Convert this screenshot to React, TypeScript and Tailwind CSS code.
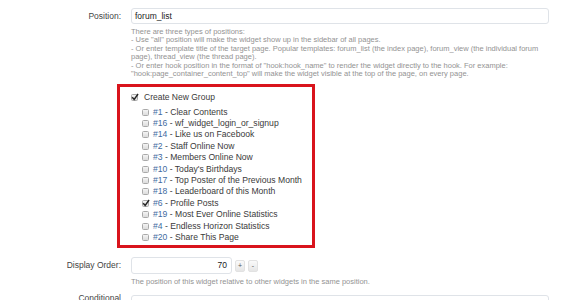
import React from 'react'

type Widget = { id: number; title: string; checked?: boolean }

const widgets: Widget[] = [
  { id: 1, title: 'Clear Contents' },
  { id: 16, title: 'wf_widget_login_or_signup' },
  { id: 14, title: 'Like us on Facebook' },
  { id: 2, title: 'Staff Online Now' },
  { id: 3, title: 'Members Online Now' },
  { id: 10, title: "Today's Birthdays" },
  { id: 17, title: 'Top Poster of the Previous Month' },
  { id: 18, title: 'Leaderboard of this Month' },
  { id: 6, title: 'Profile Posts', checked: true },
  { id: 19, title: 'Most Ever Online Statistics' },
  { id: 4, title: 'Endless Horizon Statistics' },
  { id: 20, title: 'Share This Page' },
]

const helpLines = [
  'There are three types of positions:',
  '- Use "all" position will make the widget show up in the sidebar of all pages.',
  '- Or enter template title of the target page. Popular templates: forum_list (the index page), forum_view (the individual forum',
  'page), thread_view (the thread page).',
  '- Or enter hook position in the format of "hook:hook_name" to render the widget directly to the hook. For example:',
  '"hook:page_container_content_top" will make the widget visible at the top of the page, on every page.',
]

const Checkbox = ({ checked }: { checked?: boolean }) => (
  <span className="relative inline-block w-[7px] h-[7px] shrink-0 rounded-[1.5px] border border-[#a9a9a9] bg-gradient-to-b from-[#f4f4f4] to-[#dcdcdc]">
    {checked && (
      <svg viewBox="0 0 10 10" className="absolute left-[-1px] top-[-2px] w-[8px] h-[8px]">
        <path d="M1.5 5.2 L4 8 L8.8 1.2" fill="none" stroke="#222" strokeWidth="1.8" />
      </svg>
    )}
  </span>
)

const Label = ({ children }: { children: React.ReactNode }) => (
  <div className="w-[121px] shrink-0 text-right text-[8.5px] text-[#444]">{children}</div>
)

export default function App() {
  return (
    <div className="w-[573px] h-[300px] overflow-hidden bg-white pt-[8px] font-['Liberation_Sans',Arial,sans-serif]">
      {/* Position */}
      <div className="flex items-start gap-[10px]">
        <Label>
          <div className="h-[16px] leading-[16px]">Position:</div>
        </Label>
        <div className="w-[418px]">
          <div className="h-[16px] rounded-[3px] border border-[#dfe3e8] bg-white pl-[3px] text-[8.5px] leading-[14px] text-[#222]">
            forum_list
          </div>
          <div className="mt-[4px] text-[7.5px] leading-[8.4px] text-[#939393]">
            {helpLines.map((line, i) => (
              <div key={i} className="whitespace-nowrap">
                {line}
              </div>
            ))}
          </div>

          {/* group box */}
          <div className="ml-[-14px] mt-[6px] h-[164px] w-[198px] border-[3px] border-[#d9141c] bg-white pl-[11px] pt-[4px]">
            <div className="flex items-center gap-[6px] h-[11.4px] text-[8.5px] text-[#3a3a3a]">
              <Checkbox checked />
              <span>Create New Group</span>
            </div>
            <div className="mt-[3.6px] pl-[11px]">
              {widgets.map((w) => (
                <div key={w.id} className="flex items-center gap-[4px] h-[11.4px] text-[8.6px] whitespace-nowrap">
                  <Checkbox checked={w.checked} />
                  <span className="text-[#3a3a3a]">
                    <span className="text-[#3f6b9f]">#{w.id}</span> - {w.title}
                  </span>
                </div>
              ))}
            </div>
          </div>
        </div>
      </div>

      {/* Display Order */}
      <div className="mt-[9px] flex items-start gap-[10px]">
        <Label>
          <div className="h-[17px] leading-[17px]">Display Order:</div>
        </Label>
        <div className="w-[418px]">
          <div className="flex items-center gap-[3px]">
            <div className="h-[17px] w-[101px] rounded-[3px] border border-[#dfe3e8] bg-white pr-[4px] text-right text-[8.5px] leading-[15px] text-[#222]">
              70
            </div>
            <div className="flex h-[12px] w-[10px] items-center justify-center rounded-[2px] border border-[#e2e2e2] bg-gradient-to-b from-[#fafafa] to-[#e6e6e6] text-[7px] leading-none text-[#555]">
              +
            </div>
            <div className="flex h-[12px] w-[10px] items-center justify-center rounded-[2px] border border-[#e2e2e2] bg-gradient-to-b from-[#fafafa] to-[#e6e6e6] text-[7px] leading-none text-[#555]">
              -
            </div>
          </div>
          <div className="mt-[4px] text-[7.5px] leading-[8.4px] text-[#939393] whitespace-nowrap">
            The position of this widget relative to other widgets in the same position.
          </div>
        </div>
      </div>

      {/* Conditional */}
      <div className="mt-[4px] flex items-start gap-[10px]">
        <Label>
          <div className="leading-[12px] pt-[1px]">Conditional</div>
        </Label>
        <div className="mt-[4px] h-[30px] w-[418px] rounded-[3px] border border-[#dfe3e8] bg-white" />
      </div>
    </div>
  )
}
